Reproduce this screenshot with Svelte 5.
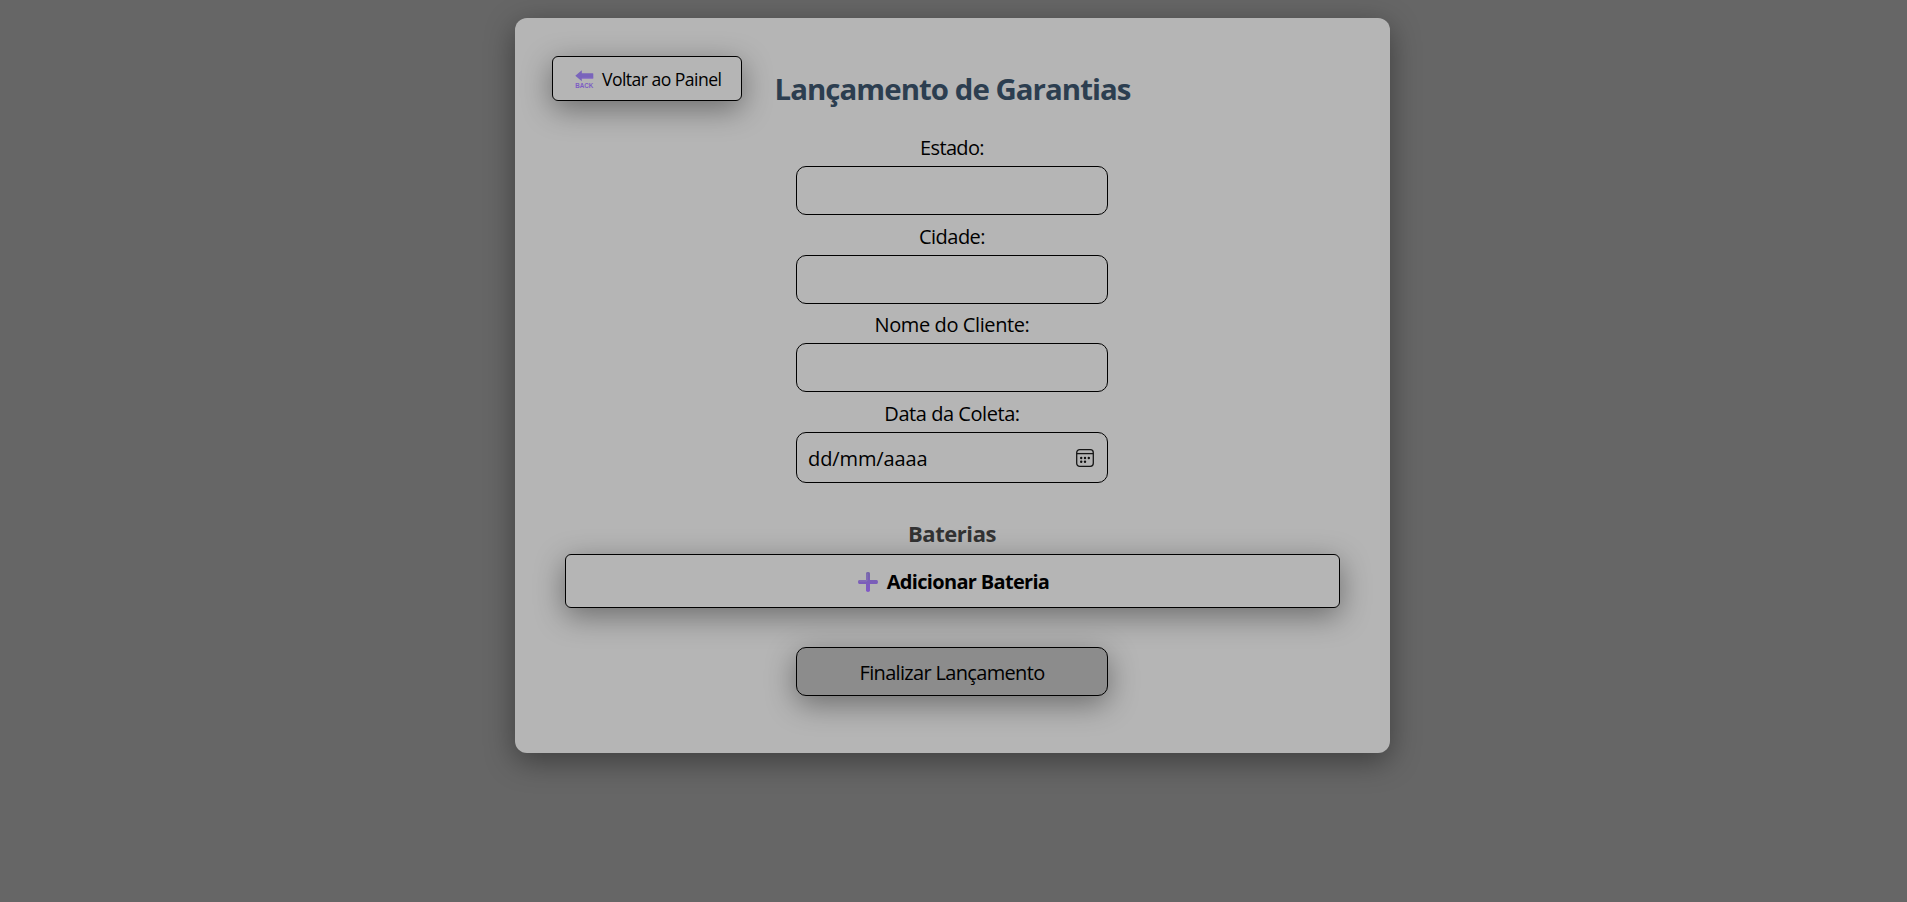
<script>
  const fields = [
    { id: 'estado', label: 'Estado:', spacing: -0.65 },
    { id: 'cidade', label: 'Cidade:', spacing: -0.5 },
    { id: 'cliente', label: 'Nome do Cliente:', spacing: -0.4 },
  ];
</script>

<main class="card">
  <header>
    <button class="back" type="button">
      <svg class="back-icon" width="19" height="19" viewBox="0 0 19 19" aria-hidden="true">
        <path d="M0.3 5.8 L6.8 0.3 V3.2 H17.7 Q18.3 3.2 18.3 3.8 V8 Q18.3 8.6 17.7 8.6 H6.8 V11.3 Z" fill="#7964bb" />
        <path d="M6.8 7.7 H18.2 V8 Q18.2 8.6 17.7 8.6 H6.8 Z" fill="#8b6bc9" />
        <text x="0.2" y="17.6" textLength="18" lengthAdjust="spacingAndGlyphs">BACK</text>
      </svg>
      <span>Voltar ao Painel</span>
    </button>
    <h1>Lançamento de Garantias</h1>
  </header>

  <form onsubmit={(e) => e.preventDefault()}>
    {#each fields as field}
      <label for={field.id} style="letter-spacing: {field.spacing}px">{field.label}</label>
      <input id={field.id} type="text" />
    {/each}

    <label for="coleta">Data da Coleta:</label>
    <div class="date" id="coleta">
      <span>dd/mm/aaaa</span>
      <svg width="18" height="18" viewBox="0 0 18 18" fill="none" aria-hidden="true">
        <rect x="0.7" y="0.7" width="16.6" height="16.6" rx="3" stroke="#161616" stroke-width="1.3" />
        <path d="M1 4.6H17" stroke="#161616" stroke-width="1.3" />
        <g fill="#111">
          <circle cx="5.2" cy="9" r="1.2" /><circle cx="9" cy="9" r="1.2" /><circle cx="12.8" cy="9" r="1.2" />
          <circle cx="5.2" cy="12.7" r="1.2" /><circle cx="9" cy="12.7" r="1.2" />
        </g>
      </svg>
    </div>

    <h2>Baterias</h2>
    <button class="add" type="button">
      <svg width="20" height="20" viewBox="0 0 20 20" aria-hidden="true">
        <defs>
          <linearGradient id="plus" x1="0" y1="0" x2="0" y2="1">
            <stop offset="0" stop-color="#7465a8" />
            <stop offset="1" stop-color="#8157c9" />
          </linearGradient>
        </defs>
        <path d="M8 1.4Q8 0 10 0T12 1.4V8H18.6Q20 8 20 10T18.6 12H12V18.6Q12 20 10 20T8 18.6V12H1.4Q0 12 0 10T1.4 8H8Z" fill="url(#plus)" />
        <path d="M1.2 9H9V1.5" fill="none" stroke="#8d7bb8" stroke-width="0.8" />
      </svg>
      <span>Adicionar Bateria</span>
    </button>
    <button class="submit" type="submit">Finalizar Lançamento</button>
  </form>
</main>

<style>
  :global(body) {
    min-height: 100vh;
    background: #666;
  }

  :global(#app) {
    display: flow-root;
    min-height: 100vh;
  }

  .card {
    box-sizing: border-box;
    width: 875px;
    height: 735px;
    margin: 18px 0 0 515px;
    padding: 38px 37px;
    border-radius: 12px;
    background: #b5b5b5;
    box-shadow: 0 8px 30px rgba(0, 0, 0, 0.4);
    color: #000;
    font-family: "Segoe UI", "Open Sans", "Noto Sans", sans-serif;
    font-size: 20px;
  }

  button,
  input {
    box-sizing: border-box;
    margin: 0;
    border: 1px solid #000;
    background: #b5b5b5;
    color: #000;
    font: inherit;
  }

  header {
    display: grid;
    grid-template-columns: 190px 1fr 190px;
    height: 72px;
  }

  .back {
    display: flex;
    align-items: center;
    width: 190px;
    height: 45px;
    padding: 0 0 0 22px;
    gap: 8px;
    border-radius: 6px;
    box-shadow: 0 8px 30px rgba(0, 0, 0, 0.4);
    font-size: 17.6px;
    letter-spacing: -0.55px;
    white-space: nowrap;
  }

  .back-icon {
    flex: none;
    overflow: visible;
    margin-top: 1px;
  }

  .back-icon text {
    fill: #7c5cc4;
    font: bold 7.5px "Liberation Sans", sans-serif;
    letter-spacing: 0;
  }

  h1 {
    margin: 12px 0 0;
    color: #2c3e50;
    font-size: 29.4px;
    line-height: 42px;
    letter-spacing: -0.95px;
    text-align: center;
    white-space: nowrap;
  }

  form {
    display: flex;
    flex-direction: column;
    align-items: center;
  }

  label {
    height: 27px;
    margin: 0 1px 11px 0;
    line-height: 40px;
    letter-spacing: -0.45px;
  }

  input,
  .date {
    width: 312px;
    height: 49px;
    border-radius: 10px;
    margin: 0 1px 1.67px 0;
  }

  .date {
    box-sizing: border-box;
    display: flex;
    align-items: center;
    justify-content: space-between;
    height: 51px;
    margin-bottom: 0;
    padding: 2px 13px 0 11px;
    border: 1px solid #000;
    letter-spacing: -0.1px;
  }

  .date svg {
    margin-top: -1px;
  }

  h2 {
    margin: 36px 1px 6px 0;
    color: #333;
    font-size: 22px;
    line-height: 29px;
    letter-spacing: -0.45px;
  }

  .add {
    display: flex;
    align-items: center;
    justify-content: center;
    gap: 9px;
    width: 775px;
    height: 54px;
    padding: 2px 0 0 2px;
    border-radius: 6px;
    box-shadow: 0 8px 30px rgba(0, 0, 0, 0.4);
    font-weight: bold;
    letter-spacing: -0.68px;
  }

  .submit {
    width: 312px;
    height: 49px;
    margin: 39px 1px 0 0;
    padding: 2px 0 0;
    border-radius: 10px;
    background: #8c8c8c;
    box-shadow: 0 8px 30px rgba(0, 0, 0, 0.4);
    letter-spacing: -0.67px;
  }
</style>
